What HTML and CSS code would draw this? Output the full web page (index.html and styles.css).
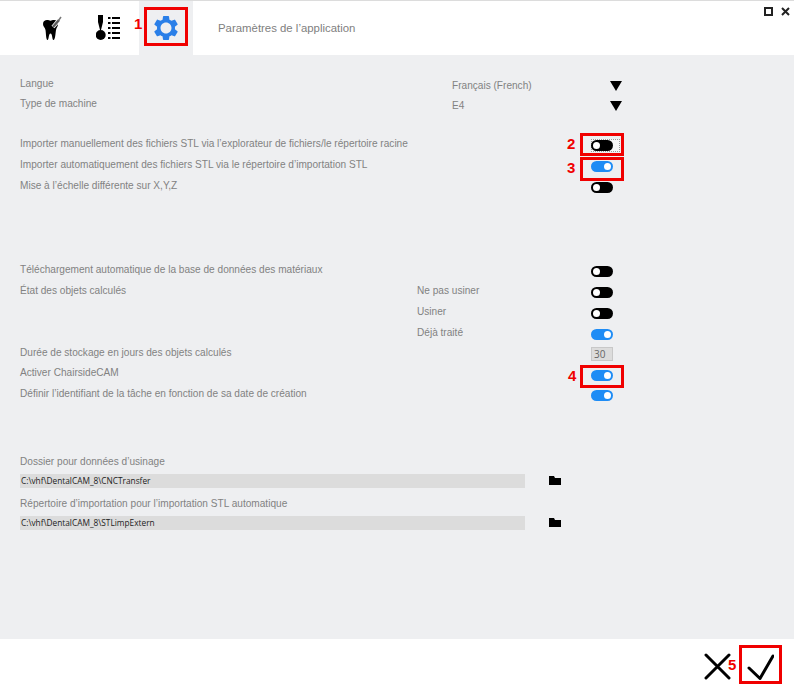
FILE: index.html
```html
<!DOCTYPE html>
<html lang="fr">
<head>
  <meta charset="UTF-8">
  <title>Paramètres de l'application</title>
  <link rel="stylesheet" href="styles.css">
</head>
<body>
  <div class="app">
    <header class="topbar">
      <div class="tab">
        <svg width="24" height="26" viewBox="0 0 24 26">
          <path d="M4 9c0-3 2-4 4-4 1.500 0 2.500.7 3.500.7S13.500 5 15 5c2.500 0 4 1.500 4 4 0 2.500-1.500 3.500-2 6-.5 3-.8 10-2.500 10-1.500 0-1-6.500-3-6.500S10 25 8.500 25C7 25 7 18 6.500 15 6 12.500 4 11.500 4 9z" fill="#000"/>
          <path d="M14 12 20 5" stroke="#fff" stroke-width="4"/>
          <path d="M14 12 20 5" stroke="#5c5c5c" stroke-width="2.500"/>
          <path d="M19.500 5.500 22 2" stroke="#777" stroke-width="1.500"/>
        </svg>
      </div>
      <div class="tab tab-wide">
        <svg width="26" height="26" viewBox="0 0 26 26">
          <path d="M2 0h5v7L5 15H4L2 7z" fill="#000"/>
          <circle cx="4.700" cy="20" r="5" fill="#000"/>
          <rect x="12" y="2" width="2.500" height="2" fill="#000"/>
          <rect x="16" y="2" width="8" height="2" fill="#000"/>
          <rect x="12" y="7" width="2.500" height="2" fill="#000"/>
          <rect x="16" y="7" width="8" height="2" fill="#000"/>
          <rect x="12" y="12" width="2.500" height="2" fill="#000"/>
          <rect x="16" y="12" width="8" height="2" fill="#000"/>
          <rect x="12" y="17" width="2.500" height="2" fill="#000"/>
          <rect x="16" y="17" width="8" height="2" fill="#000"/>
          <rect x="12" y="22" width="2.500" height="2" fill="#000"/>
          <rect x="16" y="22" width="8" height="2" fill="#000"/>
        </svg>
      </div>
      <div class="tab tab-active">
        <svg width="30" height="30" viewBox="0 0 24 24">
          <path fill="#2a7fe8" d="M19.140 12.940c.04-.3.06-.61.06-.94 0-.32-.02-.64-.07-.94l2.030-1.580a.49.49 0 0 0 .12-.61l-1.920-3.320a.488.488 0 0 0-.59-.22l-2.390.96c-.5-.38-1.030-.7-1.620-.94l-.36-2.540a.484.484 0 0 0-.48-.41h-3.840c-.24 0-.43.17-.47.41l-.36 2.540c-.59.24-1.130.57-1.620.94l-2.390-.96c-.22-.08-.47 0-.59.22L2.740 8.870c-.12.21-.08.47.12.61l2.030 1.580c-.05.3-.09.63-.09.94s.02.64.07.94l-2.030 1.580a.49.49 0 0 0-.12.61l1.920 3.320c.12.22.37.29.59.22l2.390-.96c.5.38 1.030.7 1.620.94l.36 2.540c.05.24.24.41.48.41h3.840c.24 0 .44-.17.47-.41l.36-2.540c.59-.24 1.130-.56 1.620-.94l2.390.96c.22.08.47 0 .59-.22l1.920-3.320c.12-.22.07-.47-.12-.61l-2.010-1.580zM12 16.400c-2.430 0-4.400-1.970-4.400-4.400s1.970-4.400 4.400-4.400 4.400 1.970 4.400 4.400-1.970 4.400-4.400 4.400z"/>
        </svg>
      </div>
      <div class="page-title">Paramètres de l’application</div>
      <div class="win-controls">
        <span class="win-max"></span>
        <svg width="9" height="9" viewBox="0 0 9 9"><path d="M1 1 8 8M8 1 1 8" stroke="#222" stroke-width="2"/></svg>
      </div>
    </header>

    <main class="settings">
      <section class="group group-select">
        <div class="row row-short">
          <span class="label">Langue</span>
          <span class="value">Français (French)</span>
          <span class="arrow"></span>
        </div>
        <div class="row row-short">
          <span class="label">Type de machine</span>
          <span class="value">E4</span>
          <span class="arrow"></span>
        </div>
      </section>

      <section class="group group-import">
        <div class="row">
          <span class="label">Importer manuellement des fichiers STL via l’explorateur de fichiers/le répertoire racine</span>
          <span class="toggle focused"></span>
        </div>
        <div class="row">
          <span class="label">Importer automatiquement des fichiers STL via le répertoire d’importation STL</span>
          <span class="toggle on"></span>
        </div>
        <div class="row">
          <span class="label">Mise à l’échelle différente sur X,Y,Z</span>
          <span class="toggle"></span>
        </div>
      </section>

      <section class="group group-objects">
        <div class="row">
          <span class="label">Téléchargement automatique de la base de données des matériaux</span>
          <span class="toggle"></span>
        </div>
        <div class="row">
          <span class="label">État des objets calculés</span>
          <span class="sublabel">Ne pas usiner</span>
          <span class="toggle"></span>
        </div>
        <div class="row">
          <span class="label"></span>
          <span class="sublabel">Usiner</span>
          <span class="toggle"></span>
        </div>
        <div class="row">
          <span class="label"></span>
          <span class="sublabel">Déjà traité</span>
          <span class="toggle on"></span>
        </div>
        <div class="row row-short">
          <span class="label">Durée de stockage en jours des objets calculés</span>
          <span class="num-input">30</span>
        </div>
        <div class="row row-short">
          <span class="label">Activer ChairsideCAM</span>
          <span class="toggle on"></span>
        </div>
        <div class="row">
          <span class="label">Définir l’identifiant de la tâche en fonction de sa date de création</span>
          <span class="toggle on"></span>
        </div>
      </section>

      <section class="group group-paths">
        <div class="path-label">Dossier pour données d’usinage</div>
        <div class="path-row">
          <div class="path-input">C:\vhf\DentalCAM_8\CNCTransfer</div>
          <svg class="folder" width="12" height="9" viewBox="0 0 12 9"><path d="M0 0h5l1 2h6v7H0z" fill="#000"/></svg>
        </div>
        <div class="path-label">Répertoire d’importation pour l’importation STL automatique</div>
        <div class="path-row">
          <div class="path-input">C:\vhf\DentalCAM_8\STLimpExtern</div>
          <svg class="folder" width="12" height="9" viewBox="0 0 12 9"><path d="M0 0h5l1 2h6v7H0z" fill="#000"/></svg>
        </div>
      </section>
    </main>

    <footer class="actions">
      <svg class="action" width="27" height="27" viewBox="0 0 27 27"><path d="M2 2 25 25M25 2 2 25" stroke="#000" stroke-width="3" stroke-linecap="round"/></svg>
      <svg class="action" width="27" height="27" viewBox="0 0 27 27"><path d="M2 15 13 25.500 26 3" fill="none" stroke="#000" stroke-width="3" stroke-linecap="round" stroke-linejoin="round"/></svg>
    </footer>

    <!-- red callouts drawn over the screenshot -->
    <div class="mark mark-1"></div>
    <div class="mark mark-2"></div>
    <div class="mark mark-3"></div>
    <div class="mark mark-4"></div>
    <div class="mark mark-5"></div>
    <span class="num num-1">1</span>
    <span class="num num-2">2</span>
    <span class="num num-3">3</span>
    <span class="num num-4">4</span>
    <span class="num num-5">5</span>
  </div>
</body>
</html>
```

FILE: styles.css
```css
:root {
  --bg: #eeeff1;
  --text: #828282;
  --blue: #1e8cf5;
  --red: #f00000;
}
html, body {
  margin: 0;
  padding: 0;
}
body {
  font-family: "Liberation Sans", Arial, sans-serif;
  font-size: 10.1px;
  color: var(--text);
  background: var(--bg);
}
.app {
  position: relative;
  width: 794px;
  height: 689px;
  overflow: hidden;
  display: flex;
  flex-direction: column;
}
.topbar {
  height: 54px;
  flex: none;
  background: #fff;
  border-top: 1px solid #dcdcdc;
  padding-left: 24px;
  display: flex;
  align-items: stretch;
}
.tab {
  width: 54px;
  display: flex;
  align-items: center;
  justify-content: center;
}
.tab-wide {
  width: 61px;
}
.tab-active {
  background: var(--bg);
}
.page-title {
  margin-left: 25px;
  align-self: center;
  font-size: 11.4px;
  color: #808080;
}
.win-controls {
  margin-left: auto;
  padding: 6px 4px 0 0;
  display: flex;
  align-items: flex-start;
  gap: 8px;
}
.win-max {
  width: 5px;
  height: 5px;
  border: 2px solid #222;
}
.settings {
  flex: 1;
  padding: 18px 0 0 20px;
}
.group-import {
  margin-top: 19px;
}
.group-objects {
  margin-top: 63px;
}
.group-paths {
  margin-top: 50px;
}
.row {
  height: 21px;
  display: flex;
  align-items: center;
}
.row-short {
  height: 20px;
}
.label {
  width: 397px;
  flex: none;
  margin-top: 2px;
  white-space: nowrap;
}
.row-short .label {
  margin-top: 1px;
}
.sublabel {
  width: 174px;
  flex: none;
  margin-top: 1px;
}
.value {
  width: 158px;
  flex: none;
  margin: 5px 0 0 35px;
}
.arrow {
  width: 0;
  height: 0;
  margin-top: 6px;
  border-left: 6px solid transparent;
  border-right: 6px solid transparent;
  border-top: 10px solid #000;
}
.toggle {
  position: relative;
  width: 22px;
  height: 11px;
  margin-left: auto;
  margin-right: 181px;
  margin-top: 6px;
  border-radius: 6px;
  background: #000;
}
.toggle::after {
  content: "";
  position: absolute;
  left: 2px;
  top: 2px;
  width: 7px;
  height: 7px;
  border-radius: 50%;
  background: #fff;
}
.toggle.on {
  background: var(--blue);
}
.toggle.on::after {
  left: 13px;
}
/* dotted keyboard focus box around the first switch */
.toggle.focused::before {
  content: "";
  position: absolute;
  z-index: -1;
  left: 0;
  top: -1px;
  width: 27px;
  height: 11px;
  background: #f7f7f7;
  border: 1px dotted #999;
}
.num-input {
  width: 18px;
  height: 12px;
  margin: 3px 181px 0 auto;
  padding-left: 2px;
  line-height: 13px;
  background: #dcdcdc;
  border: 1px solid #c8c8c8;
  font-family: "Open Sans", sans-serif;
  font-size: 10px;
  color: #666;
}
.path-label {
  height: 21px;
  line-height: 17px;
}
.path-row {
  height: 21px;
  display: flex;
  align-items: flex-start;
}
.path-input {
  width: 505px;
  height: 14px;
  line-height: 14px;
  background: #dcdcdc;
  font-family: "Open Sans", sans-serif;
  font-size: 8.3px;
  color: #222;
  padding-left: 1px;
  box-sizing: border-box;
}
.folder {
  margin: 2px 0 0 24px;
}
.actions {
  height: 50px;
  flex: none;
  background: #fff;
  display: flex;
  align-items: center;
  justify-content: flex-end;
  gap: 16px;
  padding-right: 20px;
  box-sizing: border-box;
}
.action {
  margin-top: 5px;
}
.mark {
  position: absolute;
  box-sizing: border-box;
  border: 3px solid var(--red);
}
.mark-1 { left: 144px; top: 7px; width: 44px; height: 39px; }
.mark-2 { left: 580px; top: 133px; width: 44px; height: 23px; }
.mark-3 { left: 580px; top: 157px; width: 44px; height: 24px; }
.mark-4 { left: 580px; top: 365px; width: 44px; height: 23px; }
.mark-5 { left: 739px; top: 645px; width: 43px; height: 39px; }
.num {
  position: absolute;
  font-size: 15px;
  line-height: 14px;
  font-weight: bold;
  color: var(--red);
}
.num-1 { left: 134px; top: 17px; }
.num-2 { left: 567px; top: 137px; }
.num-3 { left: 567px; top: 161px; }
.num-4 { left: 568px; top: 369px; }
.num-5 { left: 728px; top: 658px; }
```
